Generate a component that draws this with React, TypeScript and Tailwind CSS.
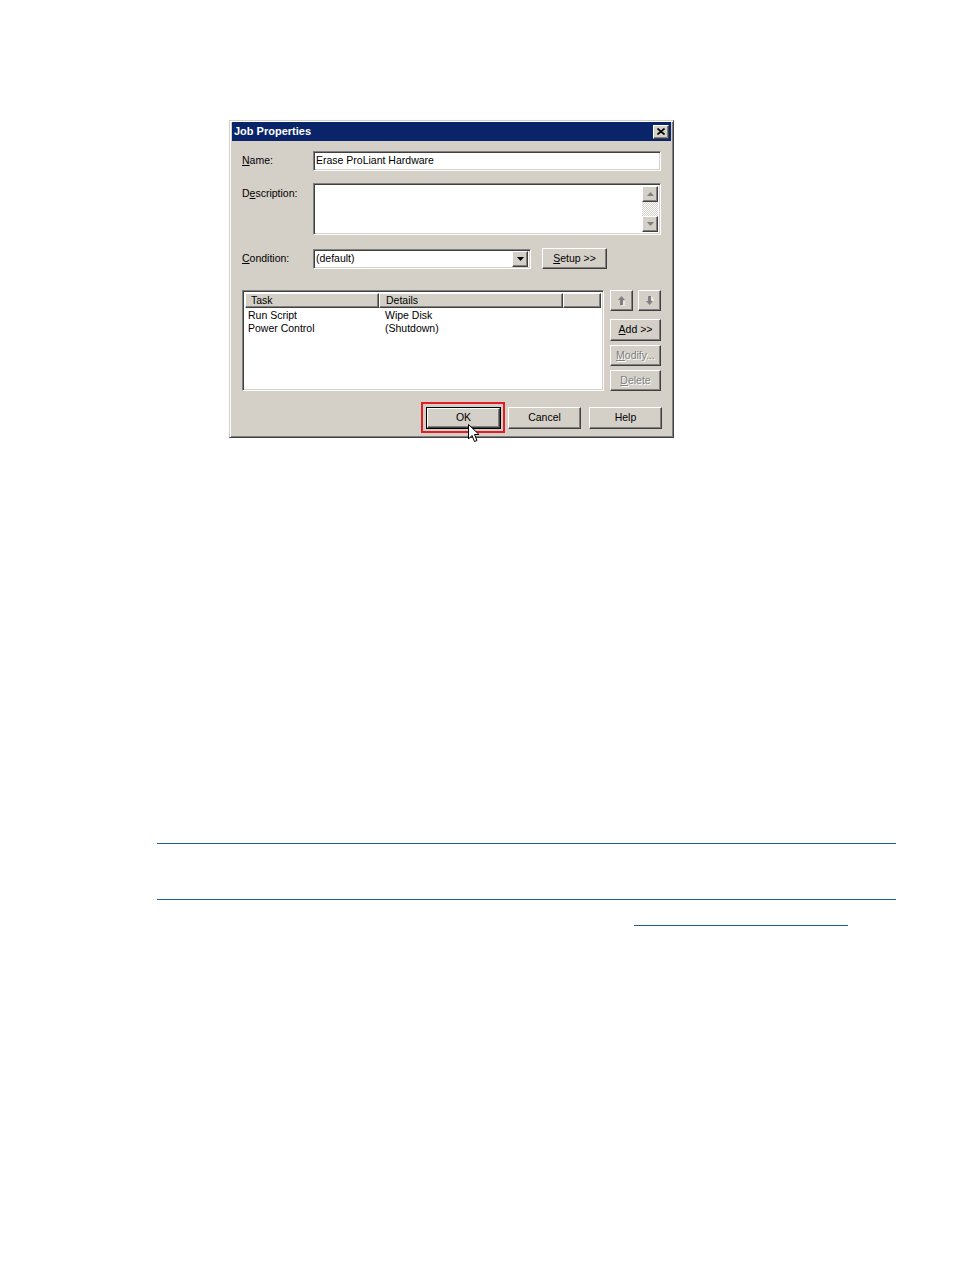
import React from 'react';

const raised =
  'bg-[#d4d0c8] border border-t-white border-l-white border-r-[#404040] border-b-[#404040] shadow-[inset_-1px_-1px_0_#808080,inset_1px_1px_0_#d4d0c8]';
const sunken =
  'bg-white border border-t-[#808080] border-l-[#808080] border-r-white border-b-white shadow-[inset_1px_1px_0_#404040,inset_-1px_-1px_0_#d4d0c8]';

function Tri({ dir, color = '#000' }: { dir: 'up' | 'down'; color?: string }) {
  return (
    <svg width="7" height="4" viewBox="0 0 7 4">
      {dir === 'up' ? <path d="M3.5 0 L7 4 L0 4 Z" fill={color} /> : <path d="M0 0 L7 0 L3.5 4 Z" fill={color} />}
    </svg>
  );
}

function MoveArrow({ dir }: { dir: 'up' | 'down' }) {
  return (
    <svg width="9" height="11" viewBox="0 0 9 11">
      {dir === 'up' ? (
        <>
          <path d="M4.5 1 L8 5 L6 5 L6 10 L3 10 L3 5 L1 5 Z" fill="#808080" />
          <path d="M5 11 L7 11 L7 6" stroke="#fff" strokeWidth="1" fill="none" />
        </>
      ) : (
        <>
          <path d="M4.5 10 L8 6 L6 6 L6 1 L3 1 L3 6 L1 6 Z" fill="#808080" />
          <path d="M7 2 L7 5 L9 5" stroke="#fff" strokeWidth="1" fill="none" />
        </>
      )}
    </svg>
  );
}

function Btn({ children, className = '', disabled = false }: { children: React.ReactNode; className?: string; disabled?: boolean }) {
  return (
    <div
      className={`${raised} flex items-center justify-center ${
        disabled ? 'text-[#808080] [text-shadow:1px_1px_0_#fff]' : 'text-black'
      } ${className}`}
    >
      {children}
    </div>
  );
}

export default function App() {
  return (
    <div className="w-[954px] h-[1270px] bg-white font-['Liberation_Sans',Arial,sans-serif] text-[10.5px] text-black">
      <div className="pl-[229px] pt-[120px]">
        {/* Dialog */}
        <div className="w-[445px] h-[318px] bg-[#d4d0c8] border border-t-[#d4d0c8] border-l-[#d4d0c8] border-r-[#404040] border-b-[#404040] shadow-[inset_1px_1px_0_#fff,inset_-1px_-1px_0_#808080] px-[2px] pt-[1px] pb-[2px]">
          {/* Title bar */}
          <div className="h-[19px] bg-[#0a246a] flex items-center justify-between pl-[2px] pr-[2px]">
            <span className="text-white font-bold text-[11px] leading-none">Job Properties</span>
            <div className={`${raised} w-[16px] h-[14px] flex items-center justify-center`}>
              <svg width="8" height="7" viewBox="0 0 8 7">
                <path d="M0.5 0.5 L7.5 6.5 M7.5 0.5 L0.5 6.5" stroke="#000" strokeWidth="1.6" />
              </svg>
            </div>
          </div>

          <div className="pl-[10px]">
            {/* Name */}
            <div className="flex items-center mt-[10px] h-[20px]">
              <span className="w-[71px]">
                <span className="underline">N</span>ame:
              </span>
              <div className={`${sunken} w-[348px] h-[20px] flex items-center pl-[2px]`}>Erase ProLiant Hardware</div>
            </div>

            {/* Description */}
            <div className="flex mt-[12px] h-[52px]">
              <span className="w-[71px] pt-[3px]">
                D<span className="underline">e</span>scription:
              </span>
              <div className={`${sunken} w-[348px] h-[52px] flex justify-end p-[2px]`}>
                <div className="w-[16px] h-full flex flex-col">
                  <div className={`${raised} h-[16px] flex items-center justify-center`}>
                    <Tri dir="up" color="#808080" />
                  </div>
                  <div className="flex-1 bg-[repeating-conic-gradient(#d4d0c8_0_25%,#ffffff_0_50%)] bg-[length:2px_2px]" />
                  <div className={`${raised} h-[16px] flex items-center justify-center`}>
                    <Tri dir="down" color="#808080" />
                  </div>
                </div>
              </div>
            </div>

            {/* Condition */}
            <div className="flex items-center mt-[13px] h-[21px]">
              <span className="w-[71px]">
                <span className="underline">C</span>ondition:
              </span>
              <div className={`${sunken} w-[218px] h-[20px] flex items-center justify-between pl-[2px] pr-[2px] mt-[1px]`}>
                <span>(default)</span>
                <div className={`${raised} w-[16px] h-[16px] flex items-center justify-center`}>
                  <Tri dir="down" />
                </div>
              </div>
              <Btn className="w-[65px] h-[21px] ml-[11px]">
                <span>
                  <span className="underline">S</span>etup &gt;&gt;
                </span>
              </Btn>
            </div>

            {/* Task list */}
            <div className="flex mt-[21px] h-[101px]">
              <div className={`${sunken} w-[362px] h-[101px] p-[2px] flex flex-col`}>
                <div className="flex h-[15px]">
                  <div className={`${raised} w-[134px] h-[15px] flex items-center pl-[5px]`}>Task</div>
                  <div className={`${raised} w-[184px] h-[15px] flex items-center pl-[6px]`}>Details</div>
                  <div className={`${raised} flex-1 h-[15px]`} />
                </div>
                <div className="flex h-[13px] items-center mt-[1px]">
                  <span className="w-[134px] pl-[3px]">Run Script</span>
                  <span className="pl-[6px]">Wipe Disk</span>
                </div>
                <div className="flex h-[13px] items-center">
                  <span className="w-[134px] pl-[3px]">Power Control</span>
                  <span className="pl-[6px]">(Shutdown)</span>
                </div>
              </div>

              <div className="ml-[6px] w-[51px] flex flex-col">
                <div className="flex justify-between h-[21px]">
                  <Btn className="w-[23px] h-[21px]" disabled>
                    <MoveArrow dir="up" />
                  </Btn>
                  <Btn className="w-[23px] h-[21px]" disabled>
                    <MoveArrow dir="down" />
                  </Btn>
                </div>
                <Btn className="h-[22px] mt-[8px]">
                  <span>
                    <span className="underline">A</span>dd &gt;&gt;
                  </span>
                </Btn>
                <Btn className="h-[21px] mt-[4px]" disabled>
                  <span>
                    <span className="underline">M</span>odify...
                  </span>
                </Btn>
                <Btn className="h-[21px] mt-[4px]" disabled>
                  <span>
                    <span className="underline">D</span>elete
                  </span>
                </Btn>
              </div>
            </div>

            {/* Bottom buttons */}
            <div className="flex mt-[16px] h-[22px] pl-[184px]">
              <div className="relative w-[75px] h-[22px] border border-black">
                <Btn className="w-full h-full">OK</Btn>
                <div className="absolute left-[-6px] top-[-6px] right-[-5px] bottom-[-5px] border-2 border-[#e31d25]" />
                <svg className="absolute left-[41px] top-[16px]" width="12" height="19" viewBox="0 0 12 19">
                  <path d="M0.5 0.5 L0.5 15 L4 11.5 L6.5 17.5 L9 16.5 L6.5 10.5 L11 10.5 Z" fill="#fff" stroke="#000" strokeWidth="1" />
                </svg>
              </div>
              <Btn className="w-[73px] h-[22px] ml-[7px]">Cancel</Btn>
              <Btn className="w-[73px] h-[22px] ml-[8px]">Help</Btn>
            </div>
          </div>
        </div>
      </div>

      {/* Page rules */}
      <div className="pl-[157px] mt-[405px]">
        <div className="w-[739px] h-px bg-[#1f5d99]" />
        <div className="w-[739px] h-px bg-[#1f5d99] mt-[55px]" />
        <div className="ml-[477px] w-[214px] h-px bg-[#1f5d99] mt-[25px]" />
      </div>
    </div>
  );
}
